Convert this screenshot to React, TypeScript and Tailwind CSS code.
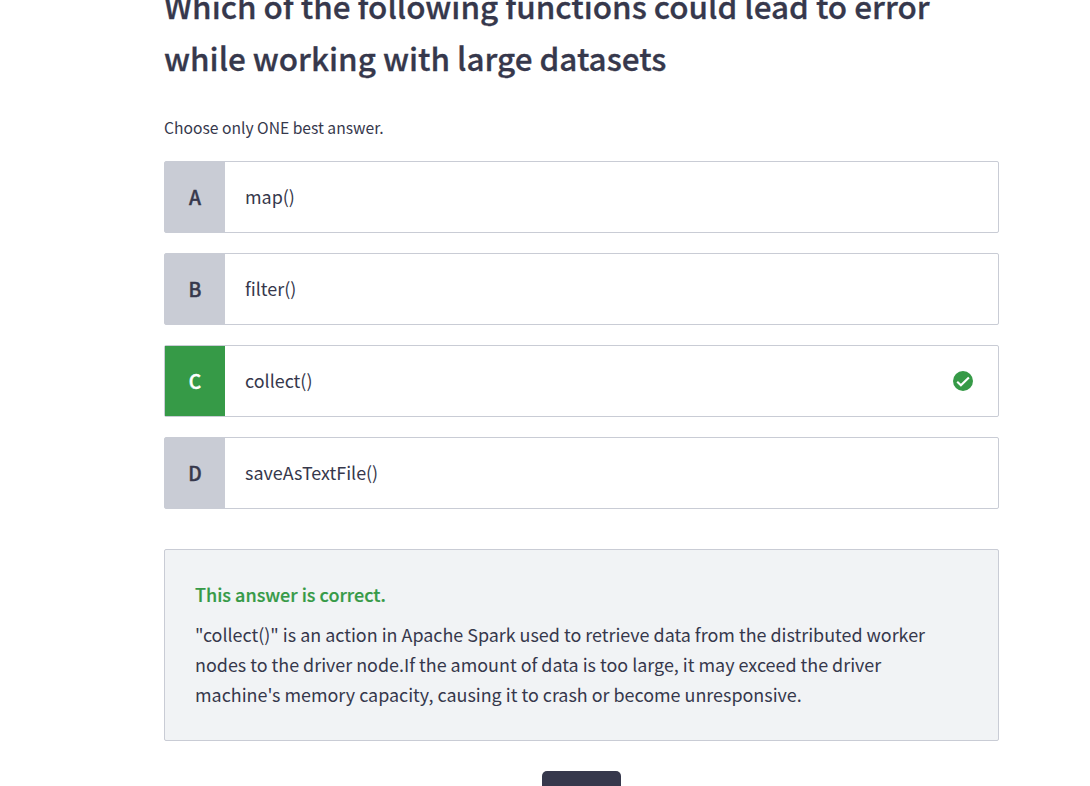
import React from "react";

const options = [
  { letter: "A", text: "map()" },
  { letter: "B", text: "filter()" },
  { letter: "C", text: "collect()", correct: true },
  { letter: "D", text: "saveAsTextFile()" },
];

function CheckBadge() {
  return (
    <svg className="mr-[25px] size-5" viewBox="0 0 20 20" fill="none">
      <circle cx="10" cy="10" r="10" fill="#369a47" />
      <path d="M4.2 10.8l3.7 3.5 8-7.9" stroke="#fff" strokeWidth="2.1" />
    </svg>
  );
}

export default function App() {
  return (
    <div className="flex h-[786px] flex-col overflow-hidden bg-white pl-[164px] font-['Noto_Sans_CJK_SC',sans-serif] text-[#36384c]">
      <h1 className="-mt-5 w-[835px] shrink-0 text-[31.45px] leading-[52px] font-medium [-webkit-text-stroke:0.3px]">
        Which of the following functions could lead to error
        <br />
        while working with large datasets
      </h1>
      <p className="mt-8 text-[15.65px] leading-[24px]">Choose only ONE best answer.</p>
      <div className="mt-[21px] flex w-[835px] flex-col gap-5">
        {options.map((o) => (
          <div key={o.letter} className="flex h-[72px] items-center rounded-xs border border-[#c9ccd5] bg-white">
            <div className={`flex h-full w-[60px] items-center justify-center text-[19.3px] font-medium [-webkit-text-stroke:0.4px] ${o.correct ? "bg-[#369a47] text-white" : "bg-[#c9ccd5]"}`}>
              {o.letter}
            </div>
            <div className="flex-1 pb-0.5 pl-5 text-[17.92px] leading-[30px]">{o.text}</div>
            {o.correct && <CheckBadge />}
          </div>
        ))}
      </div>
      <div className="mt-10 h-[192px] w-[835px] shrink-0 rounded-xs border border-[#c9ccd5] bg-[#f1f3f5] px-[30px] pt-[29px] text-[17.92px] leading-[30px]">
        <p className="mb-[10px] text-[18px] font-medium text-[#369a47] [-webkit-text-stroke:0.2px]">This answer is correct.</p>
        <p>
          "collect()" is an action in Apache Spark used to retrieve data from the distributed worker
          <br />
          nodes to the driver node.If the amount of data is too large, it may exceed the driver
          <br />
          machine's memory capacity, causing it to crash or become unresponsive.
        </p>
      </div>
      <button className="mt-[30px] ml-[378px] h-[50px] w-[79px] shrink-0 rounded-[5px] bg-[#36384c]" />
    </div>
  );
}
